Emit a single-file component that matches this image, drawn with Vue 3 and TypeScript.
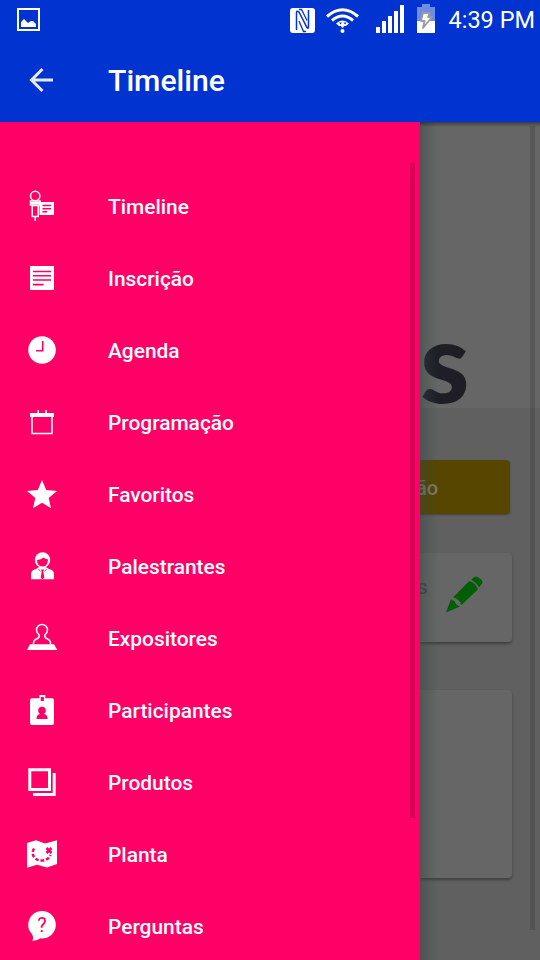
<script setup lang="ts">
type IconName =
  | 'mic' | 'note' | 'clock' | 'calendar' | 'star' | 'speaker'
  | 'exhibitor' | 'badge' | 'products' | 'map' | 'question'

interface MenuItem {
  label: string
  icon: IconName
}

const items: MenuItem[] = [
  { label: 'Timeline', icon: 'mic' },
  { label: 'Inscrição', icon: 'note' },
  { label: 'Agenda', icon: 'clock' },
  { label: 'Programação', icon: 'calendar' },
  { label: 'Favoritos', icon: 'star' },
  { label: 'Palestrantes', icon: 'speaker' },
  { label: 'Expositores', icon: 'exhibitor' },
  { label: 'Participantes', icon: 'badge' },
  { label: 'Produtos', icon: 'products' },
  { label: 'Planta', icon: 'map' },
  { label: 'Perguntas', icon: 'question' },
]
</script>

<template>
  <div class="screen">
    <header class="header">
      <div class="status">
        <svg class="picture" width="24" height="24" viewBox="0 0 24 24">
          <rect x="1" y="1" width="21" height="21" fill="none" stroke="#fff" stroke-width="2" />
          <path d="M4 19v-5l3-3 4 4 3-2h2l3 3v3z" fill="#fff" />
        </svg>
        <svg class="indicators" width="150" height="38" viewBox="0 0 150 38">
          <rect x="0" y="8" width="25" height="25" rx="3" fill="#fff" />
          <path d="M6.500 30V13q0-3 2.500-1l8 15.500q1.500 2 1.500-1V10" fill="none" stroke="#0433cf" stroke-width="1.500" />
          <path d="M9 9.500h2.500l5.500 11M16 31.500h-2.500L9 21" fill="none" stroke="#0433cf" stroke-width="1.300" />
          <g fill="none" stroke="#fff" stroke-width="3">
            <path d="M37 16.500Q52.500 3 68 16.500" />
            <path d="M42 20.500Q52.500 11.500 63 20.500" />
          </g>
          <path d="M46 23.500q6.500-6 13 0l-3 2.500h-7z" fill="#fff" />
          <path d="M49 22.500l1.500 2 1.500-2zM53.500 22.500l1.500 2 1.500-2z" fill="#0433cf" />
          <circle cx="52.500" cy="26.500" r="1.200" fill="#fff" />
          <circle cx="52.500" cy="31" r="2" fill="#fff" />
          <path d="M86 27h4v6h-4zM92 21h4v12h-4zM98 16h4v17h-4zM104 11h4v22h-4zM110 5h4v28h-4z" fill="#fff" />
          <path d="M132 4h8v3h5v14h-18V7h5z" fill="#6f8ce3" />
          <path d="M127 21h18v12h-18z" fill="#fff" />
          <path d="M133 13h7l-2 4h4l-9 11 1.500-7H131z" fill="#fff" stroke="#9b9ba5" stroke-width="1.800" stroke-linejoin="round" />
        </svg>
        <span class="time">4:39 PM</span>
      </div>
      <div class="toolbar">
        <svg class="back" width="30" height="30" viewBox="0 0 30 30">
          <path d="M28 15H7M17.500 4L6.500 15l11 11" fill="none" stroke="#e6ebfa" stroke-width="3" />
        </svg>
        <h1>Timeline</h1>
      </div>
    </header>

    <main class="body">
      <nav class="drawer">
        <a v-for="item in items" :key="item.label" class="item">
          <svg class="icon" width="36" height="36" viewBox="0 0 36 36">
            <g v-if="item.icon === 'mic'">
              <circle cx="11.200" cy="7" r="4.700" class="line" />
              <path d="M6.500 12h9.500v4H6.500zM8.200 16.500h6v11h-6zM11.200 27.500V32" class="line" />
              <path d="M7 13h9v2H7z" />
              <path d="M15.500 13H30v13H15.500z" />
              <path d="M18.500 16.500H27M18.500 19.700H27M18.500 22.700h4.500" class="cut" />
            </g>
            <g v-else-if="item.icon === 'note'">
              <path d="M6 5h24v24H6z" />
              <path d="M9 10.500h18M9 14.700h18M9 19h18M9 23.600h10.500" class="cut" />
            </g>
            <g v-else-if="item.icon === 'clock'">
              <circle cx="18" cy="17" r="13.800" />
              <path d="M18.700 8v9.700H12" class="cut" />
            </g>
            <g v-else-if="item.icon === 'calendar'">
              <path d="M6 8h24v4H6zM13.500 5h1.500v4h-1.500zM21.300 5h1.500v4h-1.500z" />
              <path d="M8 11v17.500h20V11" class="line" />
            </g>
            <path
              v-else-if="item.icon === 'star'"
              d="M18 3l4.200 10.100L33 14l-8.300 7L27 31.300l-9-5.600-9 5.600L11.300 21 3 14l10.800-.9z"
            />
            <g v-else-if="item.icon === 'speaker'">
              <circle cx="18.500" cy="11" r="7.700" />
              <path d="M7 30.300v-5.300q0-4 5-5l4-2.500h5l4 2.500q5 1 5 5v5.300z" />
              <path d="M13 11q4-.5 6.500-2.500 1.500 1.500 4.500 2 0 6.500-5.500 7Q13 17 13 11z" fill="#ff0066" />
              <path d="M17 20.500h3l-.7 2 1 6-1.800 2-1.800-2 1-6z" fill="#ff0066" />
              <path d="M14.500 20l2 2.500M22.500 20l-2 2.500" class="cut thin" />
            </g>
            <g v-else-if="item.icon === 'exhibitor'">
              <path d="M9.500 23.500q-.5-4 3-5.500 3-1 2.700-4Q12.500 12 12.500 9a5.500 5.500 0 0 1 11 0q0 3-2.700 5-.3 3 2.700 4 3.500 1.500 3 5.500" class="line" />
              <path d="M6 23.300h24l3.300 5.700h-30.300z" />
            </g>
            <g v-else-if="item.icon === 'badge'">
              <rect x="6" y="5.300" width="24" height="26.700" rx="2" />
              <path d="M15.300 8V2h6v6z" />
              <path d="M16.700 4h3.200v4h-3.200z" fill="#ff0066" />
              <circle cx="18" cy="17.500" r="3.800" fill="#ff0066" />
              <path d="M16 19h4v2q3.500.5 3.500 5h-11q0-4.500 3.500-5z" fill="#ff0066" />
            </g>
            <g v-else-if="item.icon === 'products'">
              <path d="M5.800 4.800h19.700v19.700H5.800z" class="line heavy" />
              <path d="M30.200 8v21.500H9" class="line heavy" />
            </g>
            <g v-else-if="item.icon === 'map'">
              <path d="M3 6l9-2.700 9 3.200 12-3.200v23.700L23 30.500l-10-2.700-10 2.900z" />
              <path d="M10 11.500q-2.500 4.500 0 8.500 3 4 8.500 3.500 6-.5 8-5.500" class="cut dashed" />
              <path d="M22.500 11l5 5M27.500 11l-5 5" class="cut cross" />
            </g>
            <g v-else>
              <circle cx="18" cy="15.700" r="13.800" />
              <path d="M8 25q2 4 .3 6.700 5 0 8.700-3.200z" />
              <text x="18" y="22.700" class="mark">?</text>
            </g>
          </svg>
          <span class="label">{{ item.label }}</span>
        </a>
        <span class="drawer-thumb"></span>
      </nav>

      <section class="content">
        <div class="banner"><span class="logo">s</span></div>
        <div class="button"><span>ão</span></div>
        <div class="card profile">
          <span class="caption">s</span>
          <svg width="38" height="38" viewBox="0 0 38 38" fill="#005e05">
            <path d="M26 4l3-3q3-1.200 5.500 1.300 3.700 2 2.800 4.700L34 11.500Q31.500 6 26 4z" />
            <path d="M24.300 5q6.500 2 8.700 8.300L16.500 29q-2-5.500-8.200-7.700zM6 23q1 1.700 3.500 2 .8 3.500 5.500 5.500L1 36.500z" />
          </svg>
        </div>
        <div class="card post"></div>
        <span class="page-thumb"></span>
      </section>
    </main>
  </div>
</template>

<style>
body {
  margin: 0;
  overflow: hidden;
}
</style>

<style scoped>
.screen {
  width: 540px;
  height: 960px;
  display: flex;
  flex-direction: column;
  overflow: hidden;
  font-family: Roboto, sans-serif;
}
.header {
  height: 122px;
  flex: none;
  background: #0033cf;
  color: #fff;
}
.status {
  height: 38px;
  display: flex;
  align-items: center;
  padding: 0 5px 0 17px;
}
.picture {
  margin-top: 2px;
}
.indicators {
  margin-left: 249px;
}
.time {
  flex: 1;
  margin-top: 2px;
  text-align: right;
  white-space: nowrap;
  font-size: 23.5px;
  line-height: 38px;
}
.toolbar {
  height: 84px;
  display: flex;
  align-items: center;
  padding-left: 25px;
}
.back {
  margin-top: -1px;
}
h1 {
  margin: 1px 0 0 53px;
  font-size: 30.2px;
  font-weight: 500;
  line-height: 40px;
}
.body {
  height: 838px;
  display: flex;
}
.drawer {
  position: relative;
  width: 420px;
  flex: none;
  box-sizing: border-box;
  padding-top: 49px;
  overflow: hidden;
  background: #ff0066;
}
.item {
  height: 72px;
  display: flex;
  align-items: center;
  gap: 48px;
  padding-left: 24px;
  color: #fff;
}
.icon {
  flex: none;
  fill: #fff;
}
.label {
  font-size: 20.9px;
  font-weight: 500;
}
.line {
  fill: none;
  stroke: #fff;
  stroke-width: 1.5;
}
.heavy {
  stroke-width: 3;
}
.cut {
  fill: none;
  stroke: #ff0066;
  stroke-width: 1.6;
}
.thin {
  stroke-width: 0.8;
}
.dashed {
  stroke-width: 2.5;
  stroke-dasharray: 3.5 2;
}
.cross {
  stroke-width: 2.6;
}
.mark {
  fill: #ff0066;
  font-size: 20px;
  text-anchor: middle;
}
.drawer-thumb {
  position: absolute;
  top: 41px;
  right: 5px;
  width: 5px;
  height: 655px;
  background: #d90057;
}
.content {
  position: relative;
  flex: 1;
  min-width: 0;
  overflow: hidden;
  background: #606060;
}
.content::before {
  content: '';
  position: absolute;
  z-index: 1;
  inset: 0;
  background:
    linear-gradient(to bottom, rgba(0, 0, 0, 0.4), transparent 5px),
    linear-gradient(to right, rgba(50, 70, 65, 0.45), rgba(50, 70, 65, 0.25) 7px, transparent 18px);
}
.banner {
  height: 286px;
  display: flex;
  align-items: flex-end;
  background: #666;
}
.logo {
  margin-left: 0;
  font-family: Lato, sans-serif;
  font-size: 112px;
  font-weight: 900;
  line-height: 134px;
  height: 115px;
  color: #1f1e27;
}
.button {
  height: 54px;
  margin: 52px 30px 0 0;
  display: flex;
  align-items: center;
  border-radius: 0 4px 4px 0;
  background: #574600;
  box-shadow: 0 1px 2px rgba(0, 0, 0, 0.3);
  overflow: hidden;
}
.button span {
  margin: 2px 0 0 -4px;
  font-size: 20px;
  font-weight: 500;
  color: #817b67;
}
.card {
  margin-right: 28px;
  border-radius: 0 4px 4px 0;
  background: #666;
  box-shadow: 0 2px 3px rgba(0, 0, 0, 0.35);
}
.profile {
  height: 89px;
  margin-top: 39px;
  display: flex;
  align-items: center;
}
.caption {
  width: 26px;
  margin: -21px 0 0 -3px;
  font-size: 21px;
  color: #434343;
}
.profile svg {
  margin-top: -6px;
  margin-left: 2px;
}
.post {
  height: 188px;
  margin-top: 48px;
}
.page-thumb {
  position: absolute;
  top: 4px;
  right: 5px;
  width: 5px;
  height: 804px;
  background: rgba(0, 0, 0, 0.13);
}
</style>
